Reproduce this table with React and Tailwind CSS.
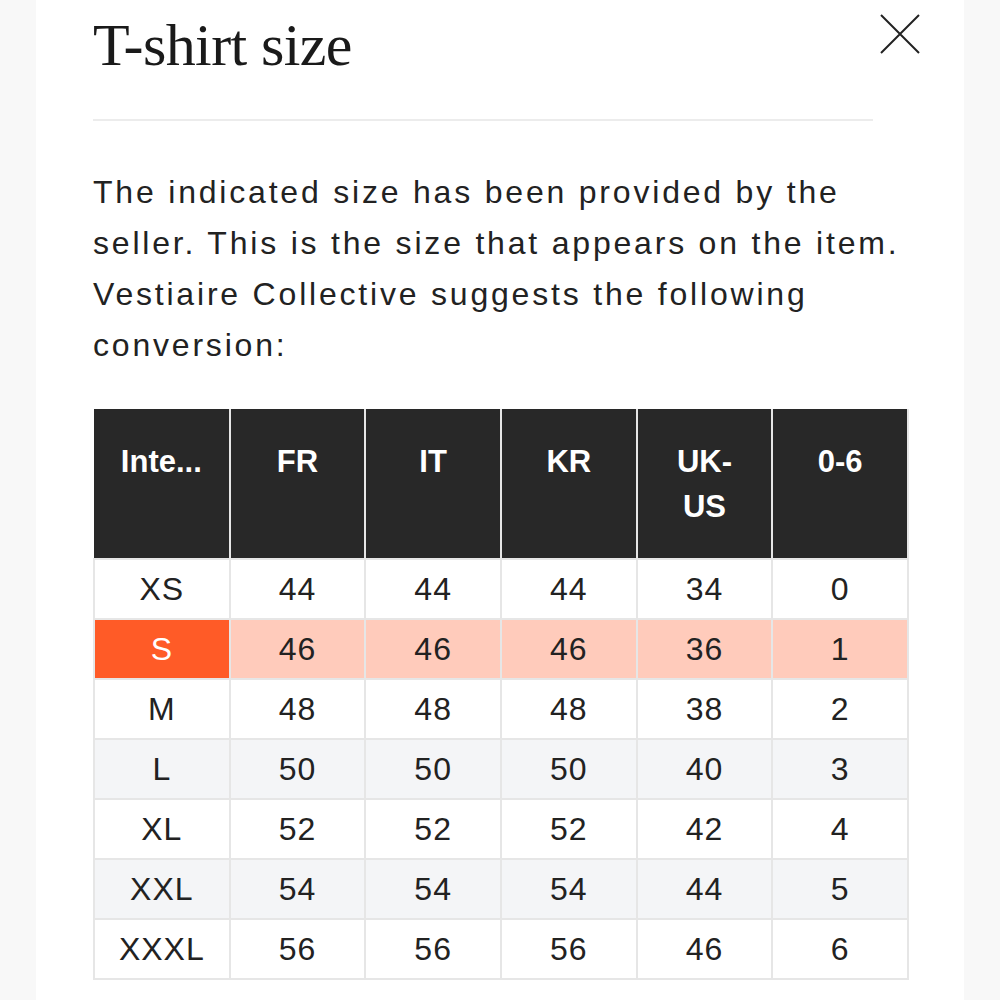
import React from "react";

const headers = ["Inte...", "FR", "IT", "KR", "UK-US", "0-6"];

const rows = [
  ["XS", "44", "44", "44", "34", "0"],
  ["S", "46", "46", "46", "36", "1"],
  ["M", "48", "48", "48", "38", "2"],
  ["L", "50", "50", "50", "40", "3"],
  ["XL", "52", "52", "52", "42", "4"],
  ["XXL", "54", "54", "54", "44", "5"],
  ["XXXL", "56", "56", "56", "46", "6"],
];

function rowBg(i, j) {
  if (i === 1) return j === 0 ? "bg-[#ff5b27] text-white" : "bg-[#ffcbbb] text-[#222]";
  if (i === 3 || i === 5) return "bg-[#f4f5f7] text-[#222]";
  return "bg-white text-[#222]";
}

export default function App() {
  return (
    <div className="flex min-h-screen justify-center bg-[#f8f8f8]">
      <div className="relative w-[928px] bg-white pl-[57px] pr-[54px] pb-[22px]">
        <div className="flex items-start justify-between">
          <h1 className="pt-[12px] font-['Liberation_Serif',serif] text-[60px] leading-[66px] tracking-[-0.6px] text-[#1a1a1a]">
            T-shirt size
          </h1>
          <button type="button" className="mt-[14px] mr-[-10px]" aria-label="Close">
            <svg width="40" height="40" viewBox="0 0 40 40" fill="none" stroke="#222" strokeWidth="2">
              <path d="M1 1L39 39M39 1L1 39" />
            </svg>
          </button>
        </div>

        <div className="mt-[41px] mr-[37px] h-[2px] bg-[#ececec]" />

        <p className="mt-[46px] font-['Liberation_Sans',Arial,sans-serif] text-[32px] leading-[51px] tracking-[2.8px] text-[#222]">
          The indicated size has been provided by the seller. This is the size that appears on the item. Vestiaire
          Collective suggests the following conversion:
        </p>

        <table className="mt-[38px] w-[816px] table-fixed border-collapse font-['Liberation_Sans',Arial,sans-serif]">
          <thead>
            <tr>
              {headers.map((h) => (
                <th
                  key={h}
                  className="h-[150px] border-x-2 border-[#e6e6e6] bg-[#282828] px-2 pt-[30px] align-top text-[31px] font-bold leading-[45px] text-white first:border-l-0"
                >
                  {h === "UK-US" ? (
                    <>
                      UK-
                      <br />
                      US
                    </>
                  ) : (
                    h
                  )}
                </th>
              ))}
            </tr>
          </thead>
          <tbody>
            {rows.map((r, i) => (
              <tr key={r[0]}>
                {r.map((c, j) => (
                  <td
                    key={j}
                    className={`h-[60px] border-2 border-[#e6e6e6] p-0 text-center align-middle text-[32px] tracking-[1px] ${rowBg(i, j)}`}
                  >
                    {c}
                  </td>
                ))}
              </tr>
            ))}
          </tbody>
        </table>
      </div>
    </div>
  );
}
